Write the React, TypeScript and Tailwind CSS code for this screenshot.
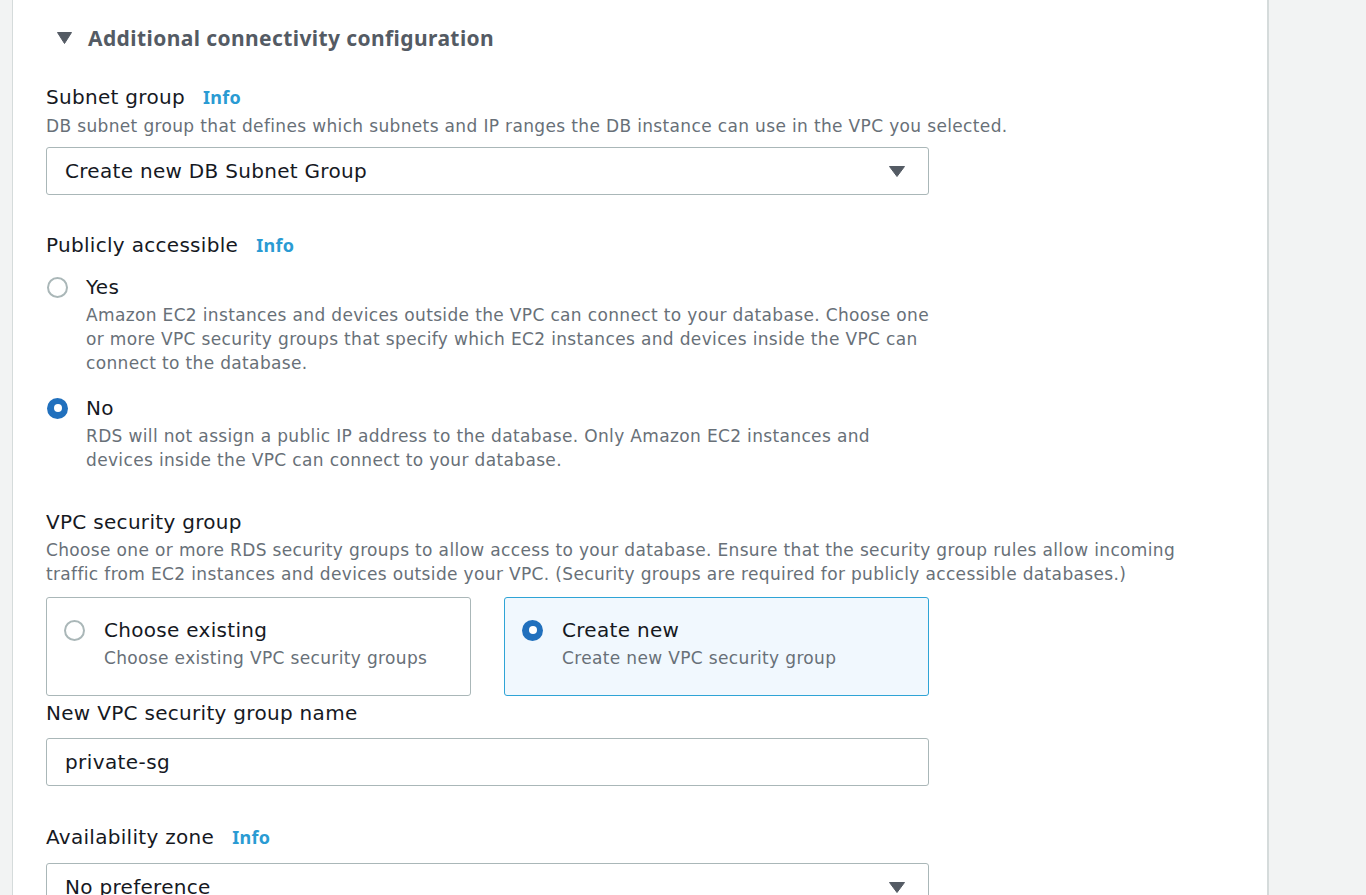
import React from "react";

const font = { fontFamily: '"DejaVu Sans", "Noto Sans", Arial, sans-serif' };
const headFont = { fontFamily: '"Noto Sans", "Open Sans", Arial, sans-serif' };

const Caret = ({ className = "" }: { className?: string }) => (
  <svg width="16" height="11" viewBox="0 0 16 11" className={className}>
    <path d="M0.5 0.5 H15.5 L8 10.5 Z" fill="#545b64" stroke="#545b64" strokeLinejoin="round" />
  </svg>
);

const Info = () => (
  <span className="ml-[18px] text-[18px] font-bold text-[#2a9bd3]" style={headFont}>
    Info
  </span>
);

const Radio = ({ checked }: { checked?: boolean }) =>
  checked ? (
    <span className="flex h-[21px] w-[21px] shrink-0 items-center justify-center rounded-full bg-[#2170bd]">
      <span className="h-[8px] w-[8px] rounded-full bg-white" />
    </span>
  ) : (
    <span className="h-[21px] w-[21px] shrink-0 rounded-full border-2 border-[#aab7b8] bg-white" />
  );

const Label = ({ children, info }: { children: React.ReactNode; info?: boolean }) => (
  <div className="flex items-baseline text-[20px] leading-[24px] tracking-[0.3px] text-[#16191f]">
    <span>{children}</span>
    {info && <Info />}
  </div>
);

const Desc = ({ children, className = "" }: { children: React.ReactNode; className?: string }) => (
  <p className={`text-[17px] leading-[24px] tracking-[0.35px] text-[#687078] ${className}`}>{children}</p>
);

const Select = ({ value }: { value: string }) => (
  <div className="flex h-[48px] w-[883px] items-center justify-between rounded-[3px] border border-[#aab7b8] bg-white pl-[18px] pr-[23px] text-[20px] tracking-[0.3px] text-[#16191f]">
    <span>{value}</span>
    <Caret />
  </div>
);

const RadioOption = ({
  checked,
  title,
  desc,
}: {
  checked?: boolean;
  title: string;
  desc: string;
}) => (
  <div className="flex">
    <div className="flex h-[24px] w-[40px] items-center pl-px">
      <Radio checked={checked} />
    </div>
    <div>
      <div className="text-[20px] leading-[24px] tracking-[0.3px] text-[#16191f]">{title}</div>
      <Desc className="mt-[4px] max-w-[852px]">{desc}</Desc>
    </div>
  </div>
);

const Tile = ({ checked, title, desc }: { checked?: boolean; title: string; desc: string }) => (
  <div
    className={`flex h-[99px] w-[425px] rounded-[3px] border px-[17px] pt-[20px] ${
      checked ? "border-[#2fa4d6] bg-[#f1f8fe]" : "border-[#aab7b8] bg-white"
    }`}
  >
    <div className="flex h-[24px] w-[40px] items-center">
      <Radio checked={checked} />
    </div>
    <div>
      <div className="text-[20px] leading-[24px] tracking-[0.3px] text-[#16191f]">{title}</div>
      <Desc className="mt-[4px]">{desc}</Desc>
    </div>
  </div>
);

export default function App() {
  return (
    <div className="flex h-[895px] overflow-hidden bg-[#f2f3f3]" style={font}>
      <div className="w-[13px] shrink-0 border-r border-[#d5dbdb]" />
      <main className="w-[1254px] shrink-0 bg-white pl-[33px] pt-[24px]">
        <div className="flex items-center pl-[11px]">
          <svg width="15" height="12" viewBox="0 0 15 12">
            <path d="M0.5 0.5 H14.5 L7.5 11.5 Z" fill="#545b64" stroke="#545b64" strokeLinejoin="round" />
          </svg>
          <h2
            className="ml-[16px] text-[21px] font-bold leading-[28px] tracking-[0.4px] text-[#545b64]"
            style={headFont}
          >
            Additional connectivity configuration
          </h2>
        </div>

        <div className="mt-[33px]">
          <Label info>Subnet group</Label>
          <Desc className="mt-[5px]">
            DB subnet group that defines which subnets and IP ranges the DB instance can use in the VPC you selected.
          </Desc>
          <div className="mt-[9px]">
            <Select value="Create new DB Subnet Group" />
          </div>
        </div>

        <div className="mt-[38px]">
          <Label info>Publicly accessible</Label>
          <div className="mt-[18px] flex flex-col gap-[21px]">
            <RadioOption
              title="Yes"
              desc="Amazon EC2 instances and devices outside the VPC can connect to your database. Choose one or more VPC security groups that specify which EC2 instances and devices inside the VPC can connect to the database."
            />
            <RadioOption
              checked
              title="No"
              desc="RDS will not assign a public IP address to the database. Only Amazon EC2 instances and devices inside the VPC can connect to your database."
            />
          </div>
        </div>

        <div className="mt-[38px]">
          <Label>VPC security group</Label>
          <Desc className="mt-[4px] max-w-[1140px]">
            Choose one or more RDS security groups to allow access to your database. Ensure that the security group rules
            allow incoming traffic from EC2 instances and devices outside your VPC. (Security groups are required for
            publicly accessible databases.)
          </Desc>
          <div className="mt-[11px] flex gap-[33px]">
            <Tile title="Choose existing" desc="Choose existing VPC security groups" />
            <Tile checked title="Create new" desc="Create new VPC security group" />
          </div>
        </div>

        <div className="mt-[5px]">
          <Label>New VPC security group name</Label>
          <div className="mt-[13px] flex h-[48px] w-[883px] items-center rounded-[3px] border border-[#aab7b8] bg-white px-[18px] text-[20px] tracking-[0.4px] text-[#16191f]">
            private-sg
          </div>
        </div>

        <div className="mt-[39px]">
          <Label info>Availability zone</Label>
          <div className="mt-[14px]">
            <Select value="No preference" />
          </div>
        </div>
      </main>
      <div className="flex-1 border-l-2 border-[#d5dbdb]" />
    </div>
  );
}
